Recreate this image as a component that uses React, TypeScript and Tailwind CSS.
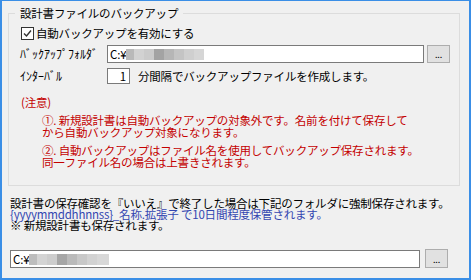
import React from "react";

type Block = { w: number; c: string };

const topPath: Block[] = [
  { w: 8, c: "#b9b9b9" },
  { w: 10, c: "#d2d2d2" },
  { w: 10, c: "#cbcbcb" },
  { w: 10, c: "#a3a3a3" },
  { w: 10, c: "#b6b6b6" },
  { w: 10, c: "#c4c4c4" },
  { w: 10, c: "#cfcfcf" },
  { w: 10, c: "#d6d6d6" },
];

const bottomPath: Block[] = [
  { w: 8, c: "#bdbdbd" },
  { w: 10, c: "#d4d4d4" },
  { w: 10, c: "#cdcdcd" },
  { w: 10, c: "#a6a6a6" },
  { w: 10, c: "#bababa" },
  { w: 10, c: "#c8c8c8" },
  { w: 10, c: "#d2d2d2" },
  { w: 12, c: "#d8d8d8" },
];

function MaskedPath({ blocks }: { blocks: Block[] }) {
  return (
    <div className="flex items-center h-full pl-[2px]">
      <span className="leading-[12px]">C:¥</span>
      <div className="flex h-[11px]">
        {blocks.map((b, i) => (
          <div key={i} style={{ width: b.w, backgroundColor: b.c }} />
        ))}
      </div>
    </div>
  );
}

function BrowseButton({ className }: { className: string }) {
  return (
    <button
      className={`border border-[#adadad] bg-[#e1e1e1] flex items-end justify-center pb-[3px] text-[9px] leading-[9px] ${className}`}
    >
      ...
    </button>
  );
}

export default function App() {
  return (
    <div className="w-[471px] h-[280px] bg-[#f0f0f0] border-[#3a8ee6] border-t border-l-2 border-r-2 border-b-2 text-[11.5px] tracking-[-0.2px] text-black font-['Noto_Sans_CJK_JP','Liberation_Sans',sans-serif] overflow-hidden">
      <fieldset className="ml-[6px] mt-[5px] w-[452px] border border-[#dcdcdc] pb-[17px]">
        <legend className="ml-[6px] px-[5px] leading-[14px]">設計書ファイルのバックアップ</legend>

        <div className="mt-[5px] h-[16px] flex items-center pl-[12px]">
          <div className="w-[13px] h-[13px] border border-[#333] bg-white flex items-center justify-center">
            <svg width="11" height="11" viewBox="0 0 11 11">
              <polyline points="2,5.5 4.5,8 9,2.5" fill="none" stroke="#333" strokeWidth="1.4" />
            </svg>
          </div>
          <span className="ml-[2px] leading-[12px]">自動バックアップを有効にする</span>
        </div>

        <div className="mt-[4px] h-[18px] flex items-center pl-[11px]">
          <span className="w-[87px] leading-[12px] text-[12px] tracking-normal">ﾊﾞｯｸｱｯﾌﾟﾌｫﾙﾀﾞ</span>
          <div className="w-[317px] h-[18px] border border-[#7a7a7a] bg-white">
            <MaskedPath blocks={topPath} />
          </div>
          <BrowseButton className="ml-[3px] w-[23px] h-[18px]" />
        </div>

        <div className="mt-[5px] h-[16px] flex items-center pl-[11px]">
          <span className="w-[87px] leading-[12px] text-[12px] tracking-normal">ｲﾝﾀｰﾊﾞﾙ</span>
          <div className="w-[23px] h-[16px] border border-[#7a7a7a] bg-white flex items-center justify-end pr-[3px] leading-[12px]">
            1
          </div>
          <span className="ml-[8px] leading-[12px]">分間隔でバックアップファイルを作成します。</span>
        </div>

        <div className="text-[#c40000]">
          <div className="mt-[12px] pl-[12px] leading-[12px]">(注意)</div>
          <div className="mt-[6px] pl-[33px] leading-[12px]">
            <div>①. 新規設計書は自動バックアップの対象外です。名前を付けて保存して</div>
            <div>から自動バックアップ対象になります。</div>
          </div>
          <div className="mt-[6px] pl-[33px] leading-[12px]">
            <div>②. 自動バックアップはファイル名を使用してバックアップ保存されます。</div>
            <div>同一ファイル名の場合は上書きされます。</div>
          </div>
        </div>
      </fieldset>

      <div className="pl-[8px]">
        <div className="mt-[12px] leading-[11px]">
          設計書の保存確認を『いいえ』で終了した場合は下記のフォルダに強制保存されます。
        </div>
        <div className="leading-[11px] text-[#3346b0]">
          {"{yyyymmddhhnnss}_名称.拡張子 で10日間程度保管されます。"}
        </div>
        <div className="leading-[11px]">※ 新規設計書も保存されます。</div>
        <div className="mt-[19px] flex items-start">
          <div className="w-[410px] h-[18px] border border-[#7a7a7a] bg-white">
            <MaskedPath blocks={bottomPath} />
          </div>
          <BrowseButton className="ml-[5px] -mt-[1px] w-[23px] h-[19px]" />
        </div>
      </div>
    </div>
  );
}
